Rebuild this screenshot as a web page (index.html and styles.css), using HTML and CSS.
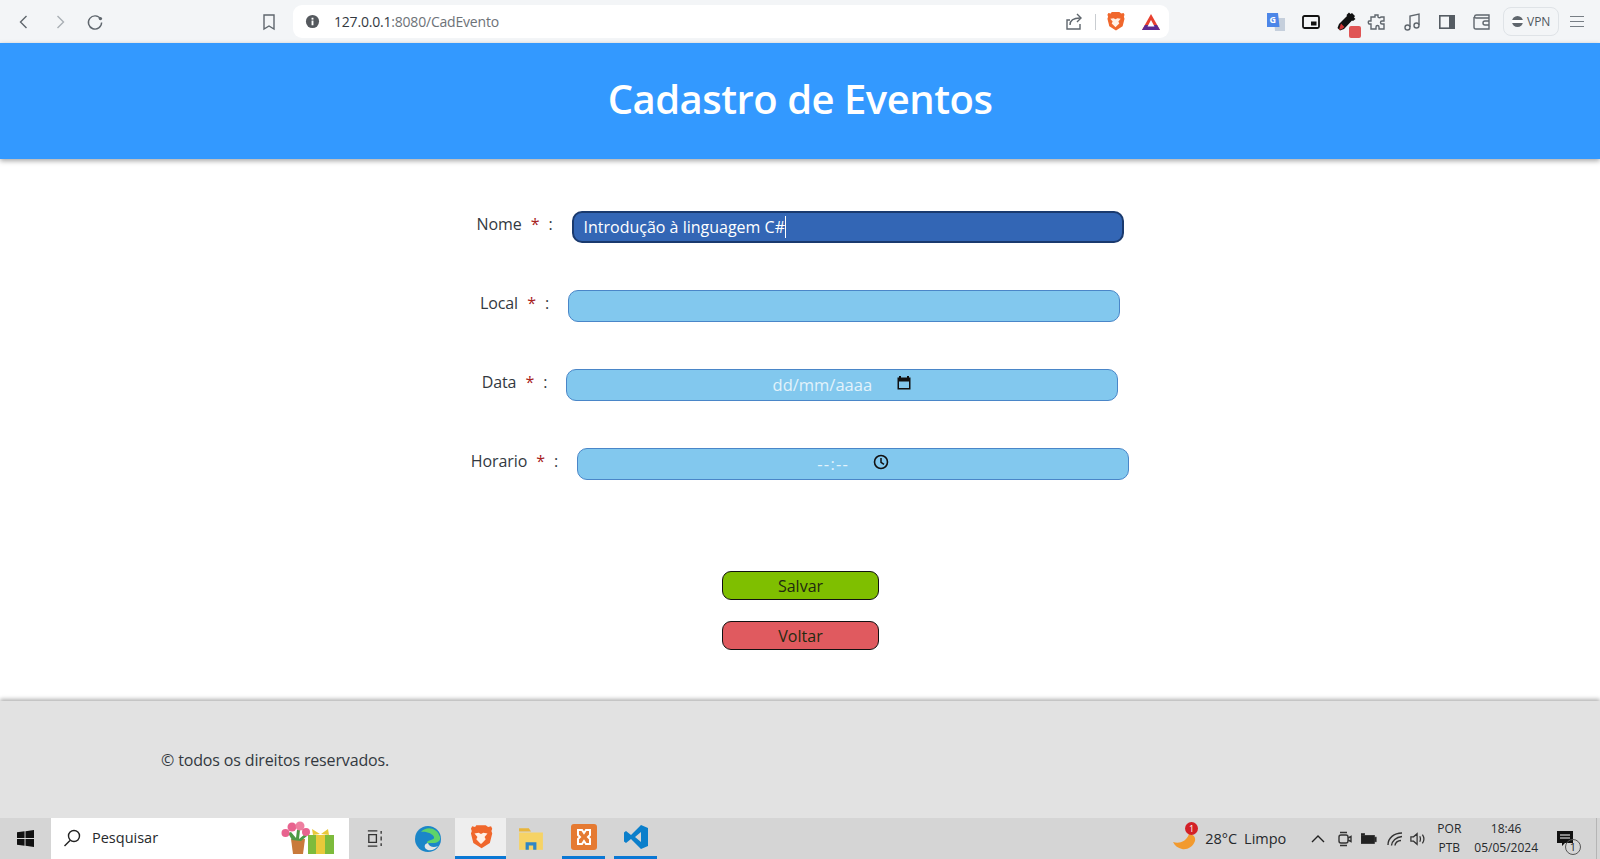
FILE: index.html
```html
<!DOCTYPE html>
<html lang="pt-BR">
<head>
	<meta charset="UTF-8">
	<title>Cadastro de Eventos</title>
	<link rel="stylesheet" href="styles.css">
</head>
<body>
	<!-- barra do navegador -->
	<div class="browser">
		<div class="nav">
			<svg class="ic back" viewBox="0 0 16 16"><path d="M10.5 2 4.5 8l6 6"/></svg>
			<svg class="ic fwd" viewBox="0 0 16 16"><path d="M5.5 2l6 6-6 6"/></svg>
			<svg class="ic reload" viewBox="0 0 18 18"><path d="M14.6 6A6.6 6.6 0 1 0 15.6 9.5"/><circle class="dot" cx="14.4" cy="5.6" r="1.7"/></svg>
		</div>
		<svg class="ic mark" viewBox="0 0 16 18"><path d="M3 2h10v14l-5-3-5 3z"/></svg>
		<div class="address">
			<svg class="info" viewBox="0 0 16 16"><circle cx="8" cy="8" r="7"/><rect class="cut" x="7" y="7" width="2" height="5"/><rect class="cut" x="7" y="4" width="2" height="2"/></svg>
			<span class="url"><b>127.0.0.1</b>:8080/CadEvento</span>
			<svg class="ic share" viewBox="0 0 18 18"><path d="M15 11v5H2V7h3"/><path d="M5 12c0-5 4-7 10-7"/><path d="M12 1l4 4-4 4"/></svg>
			<span class="sep"></span>
			<svg class="lion" viewBox="0 0 20 22"><path d="M6 1h8l2 1.500 2.500-.5 1 2-.7 2 .7 2-2 8-7 4.500-7-4.500-2-8 .7-2-.7-2 1-2 2.500.5z"/><path class="cut2" d="M4.500 8 8 7.500l2 1 2-1 3.500.5-2.500 3 1 2-3 3-1 1-1-1-3-3 1-2z"/></svg>
			<svg class="tri" viewBox="0 0 20 18"><path class="t1" d="M10 1l9 16H1z"/><path class="t2" d="M1 17h18l-3-5H4z"/><path class="t3" d="M10 7l3.5 6.500h-7z"/></svg>
		</div>
		<div class="tools">
			<svg class="slot" viewBox="0 0 20 20"><path fill="#c5cfdc" d="M8 6h11v13H9z"/><path fill="#4c86e8" d="M1 1h11l1.500 14H1z"/><text class="g" x="3.500" y="11">G</text></svg>
			<svg class="slot" viewBox="0 0 20 20"><rect x="2" y="4" width="16" height="12" rx="1.500" fill="none" stroke="#111" stroke-width="1.800"/><rect x="10" y="9.500" width="5.500" height="4" fill="#111"/></svg>
			<span class="dropper">
				<svg class="slot" viewBox="0 0 20 20"><path fill="#111" d="M13 .500l1.500 1.500 1.500-1 3 3-1 1.500 1.500 1.500-2.500 2-1-.5-8 8.500-4 1.500-2.500-2.500 1.500-4 8-8-.5-1z"/><path fill="#c33" d="M5 11.500l3.500 3.500-2.500 2-3 1 1-3.500z"/></svg>
				<i class="badge"></i>
			</span>
			<svg class="ic slot puzzle" viewBox="0 0 20 20"><path d="M8 3h3v2c0 1 3 1 3 0h3v4h-2c-2 0-2 3 0 3h2v5h-5v-2c0-2-3-2-3 0v2H4v-5H2c-1-1-1-3 0-3h2V5h4z"/></svg>
			<svg class="ic slot" viewBox="0 0 20 20"><path d="M8 15V4l9-2v11"/><circle cx="5.500" cy="15.500" r="2.500"/><circle cx="14.500" cy="13.500" r="2.500"/></svg>
			<svg class="slot" viewBox="0 0 20 20"><rect x="2.800" y="3.800" width="14.400" height="12.400" fill="none" stroke="#555c63" stroke-width="1.600"/><rect x="12" y="4" width="5" height="12" fill="#555c63"/></svg>
			<svg class="ic slot" viewBox="0 0 20 20"><path d="M17 6V3H4.500C2 3 2 6 4 6h13v11H4c-1.500 0-2-1-2-2V5"/><path d="M17 9h-4a2 2 0 0 0 0 4h4"/></svg>
			<div class="vpn"><i></i>VPN</div>
			<div class="menu"><i></i><i></i><i></i></div>
		</div>
	</div>

	<header class="top">
		<h1>Cadastro de Eventos</h1>
	</header>

	<main class="form">
		<div class="row">
			<label>Nome <em>*</em> :</label>
			<div class="field on">Introdução à linguagem C#<i class="caret"></i></div>
		</div>
		<div class="row">
			<label>Local <em>*</em> :</label>
			<div class="field"></div>
		</div>
		<div class="row">
			<label>Data <em>*</em> :</label>
			<div class="field mid">
				<span>dd/mm/aaaa</span>
				<svg viewBox="0 0 16 16"><path d="M3 1h2V2.500h6V1h2v1.500h1.500v12h-13v-12H3zM3 6.500V13h10V6.500z" fill="#111"/></svg>
			</div>
		</div>
		<div class="row">
			<label>Horario <em>*</em> :</label>
			<div class="field mid">
				<span class="dash">--:--</span>
				<svg viewBox="0 0 16 16"><circle cx="8" cy="8" r="6.500" fill="none" stroke="#111" stroke-width="1.600"/><path d="M8 4v4.300l3 2" fill="none" stroke="#111" stroke-width="1.500"/></svg>
			</div>
		</div>
		<div class="btns">
			<button class="btn save">Salvar</button>
			<button class="btn back-btn">Voltar</button>
		</div>
	</main>

	<footer class="foot">© todos os direitos reservados.</footer>

	<!-- barra de tarefas -->
	<div class="taskbar">
		<div class="start">
			<svg viewBox="0 0 18 18"><path fill="#111" d="M0 2.500l8-1.200V8.500H0zM9 1.200L18 0v8.500H9zM0 9.500h8v7.200l-8-1.200zM9 9.500h9V18l-9-1.200z"/></svg>
		</div>
		<div class="search">
			<svg class="ic lens" viewBox="0 0 18 18"><circle cx="11" cy="7" r="5.500"/><path d="M7 11.500 1.500 17"/></svg>
			<span>Pesquisar</span>
			<svg class="gift" viewBox="0 0 56 34">
				<path fill="#c97a3a" d="M11 18h14l-2 15H13z"/>
				<path fill="#4d9a45" d="M12 19 8 12l3-1 5 6 1-8h3l-1 9 6-5 2 2-6 5z"/>
				<circle cx="12" cy="6" r="4.500" fill="#e8638f"/>
				<circle cx="20" cy="5" r="4.500" fill="#ee7fa0"/>
				<circle cx="5.500" cy="12" r="4" fill="#e8638f"/>
				<circle cx="26" cy="11" r="4" fill="#e8638f"/>
				<rect x="28" y="14" width="26" height="19" fill="#7dbb3c"/>
				<rect x="36" y="14" width="9" height="19" fill="#e8c93a"/>
				<path fill="#e8c93a" d="M40 13l-8-5 1 6zM41 13l7-5 1 6z"/>
			</svg>
		</div>
		<svg class="ic tview" viewBox="0 0 20 20"><path d="M3 2h10M3 18h10M4 6h8v8H4zM17 2v3M17 8v4M17 15v3"/></svg>
		<div class="app">
			<svg viewBox="0 0 26 26"><circle cx="13" cy="13" r="13" fill="#1b86c8"/><path fill="#5ed36a" d="M6 6c5-6 16-5 19 5 1 4-3 6-7 6h-6c0-4 8-2 7-6-1-3-8-6-13-5z"/><path fill="#e4e4e4" d="M13 17c1 4 6 5 10 3-2 3-8 6-12 3-2-2-2-5 2-6z"/></svg>
		</div>
		<div class="app active">
			<svg class="lion" viewBox="0 0 20 22"><path d="M6 1h8l2 1.500 2.500-.5 1 2-.7 2 .7 2-2 8-7 4.500-7-4.500-2-8 .7-2-.7-2 1-2 2.500.5z"/><path class="cut2" d="M4.500 8 8 7.500l2 1 2-1 3.500.5-2.500 3 1 2-3 3-1 1-1-1-3-3 1-2z"/></svg>
		</div>
		<div class="app files">
			<svg viewBox="0 0 24 22"><path fill="#e8b53a" d="M1 1h9l2 3H1z"/><path fill="#f6d365" d="M1 5h22v16H1z"/><path fill="#2f86c5" d="M7 14h10v7h-3v-4h-4v4H7z"/></svg>
		</div>
		<div class="app line">
			<svg viewBox="0 0 26 26"><rect width="26" height="26" rx="3" fill="#e57a32"/><path d="M7 6h4l2 3 2-3h4v5l-2 2 2 2v5h-4l-2-3-2 3H7v-5l2-2-2-2z" fill="none" stroke="#fff" stroke-width="2"/></svg>
		</div>
		<div class="app line">
			<svg viewBox="0 0 26 26"><path fill="#0b7fcb" d="M18 1l7 3v18l-7 3-10-10-5 4-2-1.500V8.500L3 7l5 4zM18 8l-6 5 6 5z"/></svg>
		</div>
		<div class="tray">
			<span class="moon">
				<svg viewBox="0 0 26 24"><path fill="#f29a2e" d="M1 15c6 2 13 0 16-8 4 0 7 3 6 7-2 6-8 9-13 8-4-1-7-3-9-7z"/></svg>
				<i>1</i>
			</span>
			<span class="temp">28°C</span>
			<span class="sky">Limpo</span>
			<svg class="ic t-up" viewBox="0 0 14 8"><path d="M1 7l6-6 6 6"/></svg>
			<svg class="ic t-i" viewBox="0 0 16 16"><rect x="2" y="4" width="9" height="8" rx="2"/><path d="M11 7l3-1.500v5L11 9M3 1.500h7M3 14.500h7"/></svg>
			<svg class="t-i batt" viewBox="0 0 18 12"><rect y="2" width="15" height="9" fill="#222"/><rect x="15" y="4" width="2" height="5" fill="#222"/><rect y="0" width="4" height="2" fill="#222"/></svg>
			<svg class="ic t-i wifi" viewBox="0 0 16 16"><path d="M1 14C1 7 7 2 15 2M4.500 14.500C5 10 9 6 15 5.500M8 14.500c0-3 3-5 6-5"/></svg>
			<svg class="ic t-i vol" viewBox="0 0 18 16"><path d="M1 5.500h3L8 2v12l-4-3.500H1zM11 5c1 2 1 4 0 6M14 3c2 3 2 7 0 10"/></svg>
			<div class="lang"><span>POR</span><span>PTB</span></div>
			<div class="clock"><span>18:46</span><span>05/05/2024</span></div>
			<span class="note">
				<svg viewBox="0 0 18 18"><path fill="#111" d="M1 1h16v12H9l-3 3v-3H1z"/><path stroke="#fff" d="M4 5h10M4 8h10"/></svg>
				<i>1</i>
			</span>
			<span class="edge"></span>
		</div>
	</div>
</body>
</html>
```

FILE: styles.css
```css
*{
	box-sizing: border-box;
}
html,body{
	margin: 0;
	height: 100%;
}
body{
	display: flex;
	flex-direction: column;
	height: 859px;
	overflow: hidden;
	background: #fff;
	color: #33393f;
	font-family: "Open Sans", "Noto Sans", sans-serif;
}
.ic{
	fill: none;
	stroke: #5f666d;
	stroke-width: 1.4;
}

/* navegador */
.browser{
	display: flex;
	align-items: center;
	flex: 0 0 43px;
	height: 43px;
	padding-left: 16px;
	background: #f3f5f7;
}
.nav{
	display: flex;
	align-items: center;
	gap: 20px;
	width: 241px;
}
.nav svg{
	width: 16px;
	height: 16px;
}
.nav .fwd{
	stroke: #a9afb5;
}
.nav .reload{
	width: 18px;
	height: 18px;
	margin-left: -2px;
}
.dot{
	fill: #5f666d;
	stroke: none;
}
.mark{
	width: 16px;
	height: 18px;
	margin-left: 4px;
}
.address{
	display: flex;
	align-items: center;
	width: 876px;
	height: 33px;
	margin-left: 16px;
	padding: 0 8px 0 12px;
	background: #fff;
	border-radius: 9px;
}
.info{
	width: 15px;
	height: 15px;
	fill: #55595e;
}
.info .cut{
	fill: #fff;
}
.url{
	flex: 1;
	margin-left: 14px;
	color: #6d7278;
	font-size: 14px;
	letter-spacing: -.2px;
}
.url b{
	color: #33393f;
	font-weight: 400;
}
.share{
	width: 18px;
	height: 18px;
}
.sep{
	width: 1px;
	height: 16px;
	margin: 0 10px 0 12px;
	background: #c9cdd1;
}
.lion{
	width: 19px;
	height: 21px;
	fill: #f0672c;
}
.cut2{
	fill: #fff0e6;
}
.tri{
	width: 20px;
	height: 18px;
	margin-left: 16px;
}
.t1{
	fill: #e8412f;
}
.t2{
	fill: #5d2a91;
}
.t3{
	fill: #fff;
}
.tools{
	display: flex;
	align-items: center;
	gap: 15px;
	margin-left: 97px;
}
.slot{
	display: block;
	width: 20px;
	height: 20px;
}
.g{
	fill: #fff;
	font-size: 9px;
	font-weight: 700;
}
.puzzle{
	margin-left: -4px;
}
.dropper{
	position: relative;
	display: block;
}
.badge{
	position: absolute;
	right: -5px;
	bottom: -6px;
	width: 12px;
	height: 12px;
	background: #e05555;
	border-radius: 2px;
}
.vpn{
	display: flex;
	align-items: center;
	gap: 4px;
	height: 29px;
	margin-left: -4px;
	padding: 0 8px;
	border: 1px solid #dfe3e7;
	border-radius: 8px;
	color: #50575e;
	font-size: 12px;
}
.vpn i{
	width: 11px;
	height: 11px;
	background: linear-gradient(#5f666d 40%, #fff 40%, #fff 60%, #5f666d 60%);
	border-radius: 50%;
}
.menu{
	display: flex;
	flex-direction: column;
	gap: 3.500px;
	width: 14px;
	margin-left: -4px;
}
.menu i{
	height: 1.500px;
	background: #777e85;
}

/* pagina */
.top{
	flex: 0 0 116px;
	padding-top: 28px;
	background: #3399ff;
	box-shadow: 0 2px 5px rgba(0,0,0,.35);
	text-align: center;
	position: relative;
}
.top h1{
	margin: 0;
	color: #fff;
	font-size: 40px;
	line-height: 56px;
	font-weight: 600;
	letter-spacing: -.5px;
}
.form{
	flex: 1;
	padding-top: 52px;
}
.row{
	display: flex;
	justify-content: center;
	align-items: flex-start;
	gap: 19px;
	height: 32px;
	margin-bottom: 47px;
}
.row label{
	font-size: 16px;
	line-height: 26px;
	letter-spacing: -.1px;
	white-space: pre;
}
.row em{
	margin: 0 5px;
	color: #a8221c;
	font-style: normal;
}
.field{
	position: relative;
	width: 552px;
	height: 32px;
	padding-left: 10px;
	background: #82c8ee;
	border: 1px solid #4a86c8;
	border-radius: 10px;
	color: #fff;
	font-size: 16px;
	line-height: 30px;
}
.field.on{
	background: #3366b5;
	border: 2px solid #1a3a6e;
	line-height: 28px;
}
.caret{
	display: inline-block;
	width: 1px;
	height: 22px;
	background: #fff;
	vertical-align: -5px;
}
.field.mid{
	display: flex;
	justify-content: center;
	align-items: center;
	gap: 24px;
	padding: 0 0 1px;
	color: #e3f3fb;
	font-size: 16.500px;
}
.field.mid svg{
	width: 16px;
	height: 16px;
	margin-bottom: 3px;
}
.dash{
	letter-spacing: 1.200px;
}
.btns{
	display: flex;
	flex-direction: column;
	align-items: center;
	gap: 21px;
	margin-top: 91px;
	padding-left: 1px;
}
.btn{
	width: 157px;
	height: 29px;
	padding: 0;
	border: 1px solid #111;
	border-radius: 9px;
	color: #1f2a10;
	font-family: inherit;
	font-size: 16px;
}
.save{
	background: #7fbf00;
}
.back-btn{
	background: #e05a5f;
}
.foot{
	display: flex;
	align-items: center;
	flex: 0 0 117px;
	padding-left: 161px;
	background: #e2e2e2;
	box-shadow: 0 -2px 4px rgba(0,0,0,.3);
	font-size: 16px;
	letter-spacing: -.15px;
	position: relative;
}

/* barra de tarefas */
.taskbar{
	display: flex;
	align-items: center;
	flex: 0 0 41px;
	background: #d5d5d5;
	color: #26292c;
	position: relative;
}
.start{
	display: flex;
	justify-content: center;
	width: 51px;
}
.start svg{
	width: 17px;
	height: 17px;
}
.search{
	display: flex;
	align-items: center;
	width: 298px;
	height: 41px;
	padding: 0 0 2px 12px;
	background: #fff;
	font-size: 14.500px;
}
.lens{
	width: 18px;
	height: 18px;
	stroke: #222;
	margin-right: 11px;
}
.gift{
	width: 56px;
	height: 34px;
	margin-left: 122px;
}
.tview{
	width: 19px;
	height: 19px;
	margin: 0 18px 0 16px;
	stroke: #333;
}
.app{
	display: flex;
	justify-content: center;
	align-items: center;
	width: 51px;
	height: 41px;
	margin-right: 2px;
}
.app svg{
	width: 26px;
	height: 26px;
}
.app.active{
	background: #eeeeee;
	border-bottom: 3px solid #0a78d4;
}
.app.files{
	width: 46px;
	margin-right: 8px;
}
.app.line{
	width: 43px;
	margin: 0 9px 0 0;
	border-bottom: 3px solid #0a78d4;
}
.tray{
	display: flex;
	align-items: center;
	margin-left: auto;
	height: 41px;
	font-size: 14.500px;
}
.moon,.note{
	position: relative;
	display: block;
}
.moon svg{
	display: block;
	width: 26px;
	height: 24px;
}
.moon i{
	position: absolute;
	top: -5px;
	right: 0;
	width: 13px;
	height: 13px;
	background: #d32027;
	border-radius: 50%;
	color: #fff;
	font-size: 9px;
	font-style: normal;
	line-height: 13px;
	text-align: center;
}
.temp{
	margin-left: 7px;
}
.sky{
	margin-left: 7px;
}
.t-up{
	width: 14px;
	height: 8px;
	margin: 0 3px 0 25px;
	stroke: #222;
}
.t-i{
	width: 16px;
	height: 16px;
	margin-left: 9px;
	stroke: #333;
}
.t-i.batt{
	margin-left: 8px;
}
.t-i.wifi{
	margin-left: 10px;
}
.t-i.vol{
	margin-left: 7px;
}
.lang{
	display: flex;
	flex-direction: column;
	align-items: center;
	margin: 0 0 2px 11px;
	font-size: 12px;
	line-height: 19px;
}
.clock{
	display: flex;
	flex-direction: column;
	align-items: center;
	margin: 0 0 2px 13px;
	font-size: 12px;
	line-height: 19px;
}
.note{
	margin-left: 18px;
}
.note svg{
	display: block;
	width: 18px;
	height: 18px;
}
.note i{
	position: absolute;
	right: -7px;
	bottom: -7px;
	width: 16px;
	height: 16px;
	border: 1px solid #555;
	border-radius: 50%;
	font-size: 11px;
	font-style: normal;
	line-height: 14px;
	text-align: center;
}
.edge{
	width: 1px;
	height: 41px;
	margin: 0 3px 0 22px;
	background: #b5b5b5;
}
```
